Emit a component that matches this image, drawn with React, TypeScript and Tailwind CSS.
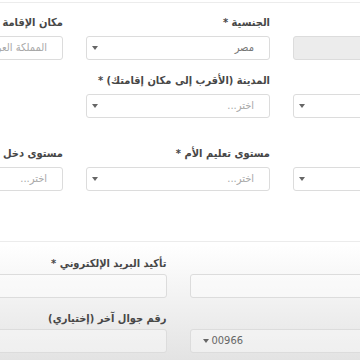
import React from 'react'

const Caret = () => (
    <svg width="6" height="4" viewBox="0 0 6 4" className="shrink-0">
        <path d="M0 0 L6 0 L3 4 Z" fill="#666" />
    </svg>
)

const Label = ({ children, tight }: { children?: React.ReactNode; tight?: boolean }) => (
    <div
        className={
            'h-4 leading-4 text-[11px] font-bold text-[#474747] whitespace-nowrap ' +
            (tight ? 'mb-[2px]' : 'mb-[5px]')
        }
    >
        {children}
    </div>
)

type BoxProps = {
    text?: string
    muted?: boolean
    caret?: boolean
    disabled?: boolean
}

const Box = ({ text, muted, caret, disabled }: BoxProps) => (
    <div
        className={
            'h-[24px] rounded-[3px] border border-[#dcdcdc] flex items-center pr-[15px] pl-[5px] overflow-hidden ' +
            (disabled ? 'bg-[#ececec]' : 'bg-white/60')
        }
    >
        <span className={'flex-1 text-[11px] whitespace-nowrap ' + (muted ? 'text-[#a8a8a8]' : 'text-[#777]')}>
            {text}
        </span>
        {caret && <Caret />}
    </div>
)

const Field = ({ label, ...box }: BoxProps & { label?: string }) => (
    <div>
        <Label>{label}</Label>
        <Box {...box} />
    </div>
)

export default function App() {
    return (
        <div
            className="w-[360px] h-[360px] overflow-hidden bg-[linear-gradient(to_bottom,#ffffff_68%,#e3e3e3)]"
            style={{ fontFamily: '"DejaVu Sans Condensed", "DejaVu Sans", "Noto Sans", sans-serif' }}
        >
            <div dir="rtl" className="w-[598px] ml-[-121px]">
                <div className="h-[3px] border-b border-[#ececec]" />

                <div className="grid grid-cols-[184px_184px_184px] gap-x-[23px] pt-[12px]">
                    {/* row 1 */}
                    <Field disabled />
                    <Field label="الجنسية *" text="مصر" caret />
                    <Field label="مكان الإقامة" text="المملكة العربية السعودية" muted />

                    {/* row 2 */}
                    <div className="mt-[13px]">
                        <Field caret />
                    </div>
                    <div className="mt-[13px]">
                        <Field label="المدينة (الأقرب إلى مكان إقامتك) *" text="اختر..." muted caret />
                    </div>
                    <div className="mt-[13px]" />

                    {/* row 3 */}
                    <div className="mt-[28px]">
                        <Field caret />
                    </div>
                    <div className="mt-[28px]">
                        <Field label="مستوى تعليم الأم *" text="اختر..." muted caret />
                    </div>
                    <div className="mt-[28px]">
                        <Field label="مستوى دخل الأسرة *" text="اختر..." muted caret />
                    </div>
                </div>

                <div className="mt-[50px] border-t border-[#ececec] pt-[14px] grid grid-cols-2 gap-x-[23px]">
                    {/* email row */}
                    <div>
                        <Label tight />
                        <div className="h-[24px] rounded-[3px] border border-[#dcdcdc] bg-white/40" />
                    </div>
                    <div>
                        <Label tight>تأكيد البريد الإلكتروني *</Label>
                        <div className="h-[24px] rounded-[3px] border border-[#dcdcdc] bg-white/40" />
                    </div>

                    {/* phone row */}
                    <div className="mt-[13px]">
                        <Label tight />
                        <div className="h-[24px] rounded-[3px] border border-[#dcdcdc] bg-white/40 flex items-center justify-end pl-[12px]">
                            <div dir="ltr" className="flex items-center gap-[3px] text-[11px] text-[#666]">
                                <Caret />
                                <span>00966</span>
                            </div>
                        </div>
                    </div>
                    <div className="mt-[13px]">
                        <Label tight>رقم جوال آخر (إختياري)</Label>
                        <div className="h-[24px] rounded-[3px] border border-[#dcdcdc] bg-white/40" />
                    </div>
                </div>
            </div>
        </div>
    )
}
